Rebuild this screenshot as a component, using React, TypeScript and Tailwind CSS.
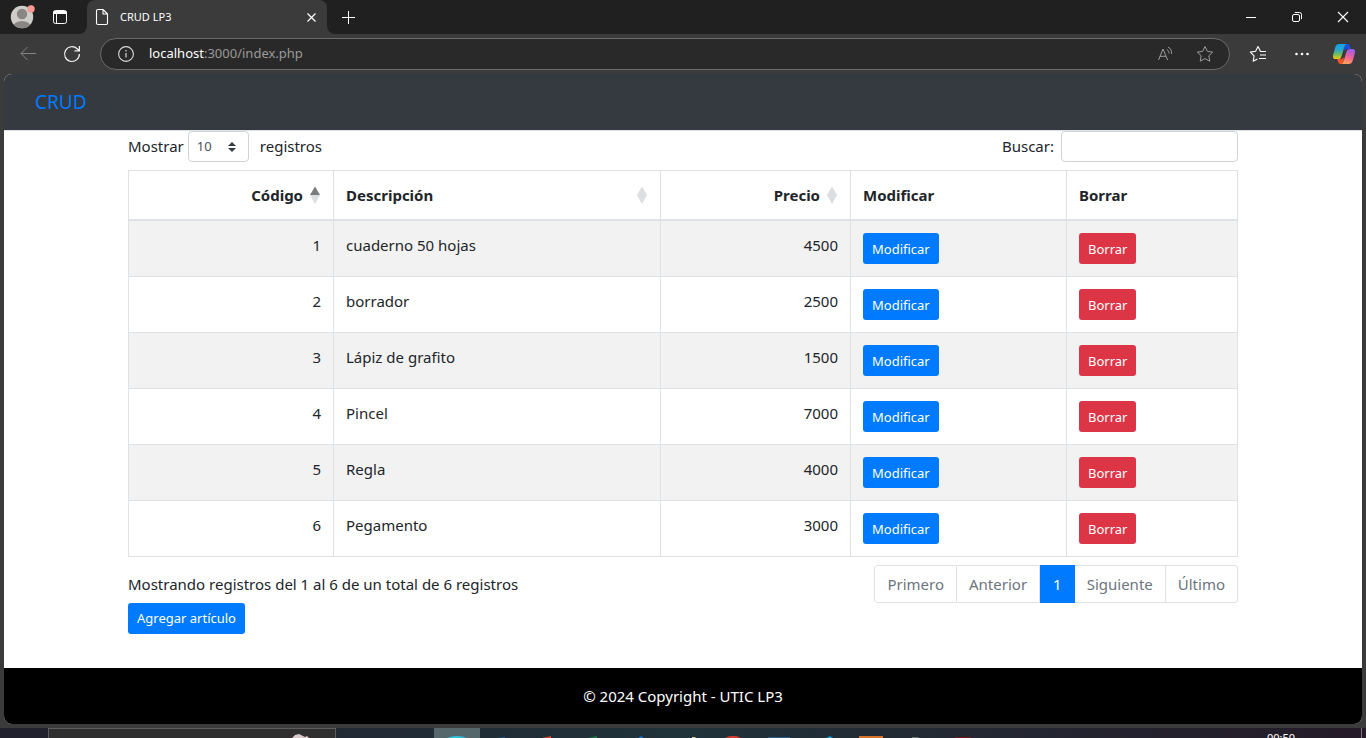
import React, { useState } from "react";

type Articulo = { codigo: number; descripcion: string; precio: number };

const articulos: Articulo[] = [
  { codigo: 1, descripcion: "cuaderno 50 hojas", precio: 4500 },
  { codigo: 2, descripcion: "borrador", precio: 2500 },
  { codigo: 3, descripcion: "Lápiz de grafito", precio: 1500 },
  { codigo: 4, descripcion: "Pincel", precio: 7000 },
  { codigo: 5, descripcion: "Regla", precio: 4000 },
  { codigo: 6, descripcion: "Pegamento", precio: 3000 },
];

function TabStrip() {
  return (
    <div className="flex h-[34px] bg-[#3b3b3b] text-white">
      <div className="flex w-[87px] items-center gap-4 rounded-br-lg bg-[#202020] pl-[10px]">
        <button type="button" aria-label="Perfil">
          <svg width="26" height="26" viewBox="0 0 26 26" className="block">
            <defs>
              <clipPath id="avatar">
                <circle cx="12" cy="13" r="11.2" />
              </clipPath>
            </defs>
            <circle cx="12" cy="13" r="11.2" fill="#cfcdca" />
            <g clipPath="url(#avatar)" fill="#8a8683">
              <circle cx="12" cy="10" r="5.2" />
              <ellipse cx="12" cy="22.5" rx="8.5" ry="5.6" />
            </g>
            <circle cx="21" cy="5" r="3.7" fill="#f79a94" />
          </svg>
        </button>
        <button type="button" aria-label="Menú de pestañas">
          <svg width="16" height="16" viewBox="0 0 16 16" fill="none" stroke="#fff" className="block">
            <rect x="1.5" y="1.5" width="13" height="13" rx="2" />
            <path d="M1.500 3.500h13" strokeWidth="3" />
            <path d="M4.500 4v10.500" />
          </svg>
        </button>
      </div>
      <div className="flex w-60 bg-linear-to-b from-[#202020] from-50% to-[#3b3b3b] to-50%">
        <div className="flex flex-1 items-center rounded-t-lg bg-[#3b3b3b] px-2">
          <svg width="14" height="18" viewBox="0 0 14 18" fill="none" stroke="#fff" strokeWidth="1.1" strokeLinejoin="round">
            <path d="M1.500 3a1.500 1.500 0 0 1 1.500-1.500h5L12.500 6v9a1.500 1.500 0 0 1-1.500 1.500H3A1.500 1.500 0 0 1 1.500 15zM8 1.500V6h4.500" />
          </svg>
          <span className="ml-[11px] flex-1 text-[11px]">CRUD LP3</span>
          <button type="button" aria-label="Cerrar pestaña" className="mr-[2px]">
            <svg width="11" height="11" viewBox="0 0 11 11" stroke="#fff" strokeWidth="1.2" className="block">
              <path d="M1.500 1.500l8 8M9.500 1.500l-8 8" />
            </svg>
          </button>
        </div>
      </div>
      <div className="flex flex-1 rounded-bl-lg bg-[#202020]">
        <button type="button" aria-label="Nueva pestaña" className="ml-[14px]">
          <svg width="15" height="15" viewBox="0 0 15 15" stroke="#fff" className="block">
            <path d="M7.500 1v13M1 7.500h13" />
          </svg>
        </button>
        <div className="ml-auto flex">
          <button type="button" aria-label="Minimizar" className="flex w-[46px] items-center justify-center">
            <svg width="12" height="12" viewBox="0 0 12 12" stroke="#fff">
              <path d="M1 6.500h10" />
            </svg>
          </button>
          <button type="button" aria-label="Restaurar" className="flex w-[46px] items-center justify-center">
            <svg width="12" height="12" viewBox="0 0 12 12" fill="none" stroke="#fff">
              <rect x="1.500" y="3.500" width="7" height="7" rx="1.500" />
              <path d="M3.800 1.500H8.500a2 2 0 0 1 2 2v4.700" />
            </svg>
          </button>
          <button type="button" aria-label="Cerrar" className="flex w-[46px] items-center justify-center">
            <svg width="12" height="12" viewBox="0 0 12 12" stroke="#fff" strokeWidth="1.100">
              <path d="M1 1l10 10M11 1L1 11" />
            </svg>
          </button>
        </div>
      </div>
    </div>
  );
}

function CopilotLogo() {
  return (
    <svg width="24" height="22" viewBox="0 0 24 22" className="block">
      <defs>
        <linearGradient id="cpA" x1="0" y1="0" x2="0" y2="1">
          <stop offset="0" stopColor="#12a2ee" />
          <stop offset="0.400" stopColor="#2ba7c8" />
          <stop offset="0.700" stopColor="#73bb5c" />
          <stop offset="1" stopColor="#f5c90b" />
        </linearGradient>
        <linearGradient id="cpB" x1="0.600" y1="0" x2="0.300" y2="1">
          <stop offset="0" stopColor="#9a5cf0" />
          <stop offset="0.500" stopColor="#f0609a" />
          <stop offset="1" stopColor="#fda45a" />
        </linearGradient>
      </defs>
      <path d="M12 1h3.500c1.800 0 2.300 1.500 2.700 3l.6 2H16c-2 0-3 .6-3.600 2z" fill="#1d50d8" />
      <path d="M12 21H8.500c-1.800 0-2.300-1.500-2.700-3l-.6-2H8c2 0 3-.6 3.600-2z" fill="#f0542b" />
      <path d="M7.200 1h7.300c-1.200.3-1.800 1.500-2.300 3.200l-2.700 9c-.6 2-1.500 2.800-3.500 2.800H3.600C1 16 .6 13.800 1.200 11.700l2-7.200C3.900 2.200 5 1 7.200 1z" fill="url(#cpA)" />
      <path d="M16.800 21H9.500c1.200-.3 1.800-1.500 2.300-3.200l2.700-9C15.100 6.800 16 6 18 6h2.400c2.600 0 3 2.200 2.400 4.300l-2 7.200c-.7 2.300-1.800 3.500-4 3.500z" fill="url(#cpB)" />
    </svg>
  );
}

function AddressBar() {
  return (
    <div className="flex h-10 items-center bg-[#3b3b3b] pr-[10px] pl-5">
      <button type="button" aria-label="Atrás">
        <svg width="16" height="16" viewBox="0 0 16 16" fill="none" stroke="#858585" className="block">
          <path d="M16 7.500H1M7.500 1l-6.500 6.500 6.500 6.500" />
        </svg>
      </button>
      <button type="button" aria-label="Actualizar" className="ml-[27px]">
        <svg width="18" height="18" viewBox="0 0 18 18" fill="none" stroke="#f4f4f4" strokeWidth="1.200" className="block">
          <path d="M16.400 9A7.400 7.400 0 1 1 14.200 3.800L16 5.600M16.400 1v4.900h-4.900" />
        </svg>
      </button>
      <div className="ml-[19px] flex h-8 flex-1 items-center rounded-full border border-[#6b6b6b] bg-[#292929] pr-[15px] pl-4">
        <svg width="18" height="18" viewBox="0 0 18 18" fill="none" stroke="#dcdcdc" strokeWidth="1.100">
          <circle cx="9" cy="9" r="7.400" />
          <path d="M9 8v4.500" strokeWidth="1.200" />
          <path d="M9 5v1.500" strokeWidth="1.200" />
        </svg>
        <span className="ml-[14px] flex-1 text-[13px] text-[#9a9a9a]">
          <span className="text-white">localhost</span>:3000/index.php
        </span>
        <button type="button" aria-label="Leer en voz alta">
          <svg width="18" height="16" viewBox="0 0 18 16" fill="none" stroke="#9c9c9c" className="block">
            <path d="M2.500 14L7 3l4.600 11M4 10.300h6M10.800 3.700c1.600.7 2.300 2 2.200 3.800M12 1.200c2.700 1.100 4 3.500 3.500 6.700" />
          </svg>
        </button>
        <button type="button" aria-label="Agregar a favoritos" className="ml-[22px]">
          <svg width="18" height="18" viewBox="0 0 18 18" fill="none" stroke="#9c9c9c" strokeLinejoin="round" className="block">
            <path d="M9 1.500l2.400 4.900 5.300.7-3.900 3.700 1 5.400L9 13.600l-4.800 2.600 1-5.400L1.300 7.100l5.300-.7z" />
          </svg>
        </button>
      </div>
      <button type="button" aria-label="Favoritos" className="ml-[19px]">
        <svg width="18" height="18" viewBox="0 0 18 18" fill="none" stroke="#fff" strokeWidth="1.100" strokeLinejoin="round" className="block">
          <path d="M17 6.500h-5.400L9 1.500 6.600 6.300l-5.300.8 3.800 3.800-.9 5.400L8.400 14.100M11 10h6M10 13.500h7" />
        </svg>
      </button>
      <button type="button" aria-label="Configuración y más" className="ml-[27px]">
        <svg width="16" height="16" viewBox="0 0 16 16" fill="#fff" className="block">
          <circle cx="2.500" cy="8" r="1.300" />
          <circle cx="8" cy="8" r="1.300" />
          <circle cx="13.500" cy="8" r="1.300" />
        </svg>
      </button>
      <button type="button" aria-label="Copilot" className="ml-[22px]">
        <CopilotLogo />
      </button>
    </div>
  );
}

function SortIcon({ active }: { active?: boolean }) {
  return (
    <svg width="10" height="18" viewBox="0 0 10 18" className="shrink-0">
      <path d="M5 .5l5 8.500H0z" fill={active ? "#7a7c7f" : "#dddedf"} />
      <path d="M5 18l5-9H0z" fill="#dddedf" />
    </svg>
  );
}

const th = "h-[50px] border-r border-b-2 border-[#dee2e6] pr-[13px] pl-3 text-left font-bold";
const td = "border-r border-b border-[#dee2e6] p-3 align-top leading-6";
const smallButton = "h-[31px] rounded-[3px] px-[9px] text-[13px] text-white";

function ArticleTable() {
  return (
    <table className="mt-2 w-full table-fixed border-separate border-spacing-0 border-t border-l border-[#dee2e6]">
      <thead>
        <tr>
          <th className={`${th} w-[205px]`} aria-sort="ascending">
            <button type="button" className="flex w-full items-center justify-end gap-[7px]">
              Código <SortIcon active />
            </button>
          </th>
          <th className={`${th} w-[327px]`}>
            <button type="button" className="flex w-full items-center justify-between">
              Descripción <SortIcon />
            </button>
          </th>
          <th className={`${th} w-[190px]`}>
            <button type="button" className="flex w-full items-center justify-end gap-[7px]">
              Precio <SortIcon />
            </button>
          </th>
          <th className={`${th} w-[216px]`}>Modificar</th>
          <th className={th}>Borrar</th>
        </tr>
      </thead>
      <tbody>
        {articulos.map((a) => (
          <tr key={a.codigo} className="odd:bg-[#f2f2f2]">
            <td className={`${td} text-right`}>{a.codigo}</td>
            <td className={td}>{a.descripcion}</td>
            <td className={`${td} text-right`}>{a.precio}</td>
            <td className={td}>
              <button type="button" className={`${smallButton} block bg-[#007bff]`}>Modificar</button>
            </td>
            <td className={td}>
              <button type="button" className={`${smallButton} block bg-[#dc3545]`}>Borrar</button>
            </td>
          </tr>
        ))}
      </tbody>
    </table>
  );
}

function Pagination() {
  const idle = "border-y border-r border-[#dee2e6] px-3 text-[#6c757d]";
  return (
    <nav aria-label="Paginación" className="flex h-[38px]">
      <button type="button" className={`${idle} rounded-l border-l`}>Primero</button>
      <button type="button" className={idle}>Anterior</button>
      <button type="button" aria-current="page" className="bg-[#007bff] px-[13px] text-white">1</button>
      <button type="button" className={idle}>Siguiente</button>
      <button type="button" className={`${idle} rounded-r`}>Último</button>
    </nav>
  );
}

function Page() {
  const [length, setLength] = useState("10");
  const [query, setQuery] = useState("");
  return (
    <div className="mx-1 mb-1 flex flex-1 flex-col overflow-hidden rounded-lg bg-white">
      <header className="flex h-[57px] items-center border-b border-[#dee2e6] bg-[#343a40] px-[31px]">
        <a href="#inicio" className="text-[19px] text-[#007bff]">CRUD</a>
      </header>
      <main className="mx-auto w-full max-w-[1110px] flex-1 text-[15px] text-[#212529]">
        <div className="flex items-center justify-between">
          <div className="flex items-center">
            <label htmlFor="cantidad">Mostrar</label>
            <div className="relative mx-1">
              <select
                id="cantidad"
                value={length}
                onChange={(e) => setLength(e.target.value)}
                className="block h-[31px] w-[61px] appearance-none rounded border border-[#ced4da] bg-white pl-2 text-[13px] text-[#495057]"
              >
                <option>10</option>
                <option>25</option>
                <option>50</option>
                <option>100</option>
              </select>
              <svg width="8" height="10" viewBox="0 0 8 10" fill="#343a40" className="pointer-events-none absolute top-[11px] right-[13px]">
                <path d="M4 0l4 4H0zM4 10l4-4H0z" />
              </svg>
            </div>
            <span className="ml-[7px]">registros</span>
          </div>
          <div className="flex items-center gap-[7px]">
            <label htmlFor="buscar">Buscar:</label>
            <input
              id="buscar"
              type="search"
              value={query}
              onChange={(e) => setQuery(e.target.value)}
              className="h-[31px] w-[177px] rounded border border-[#ced4da] bg-white px-2 text-[13px]"
            />
          </div>
        </div>
        <ArticleTable />
        <div className="mt-2 flex items-center justify-between">
          <p>Mostrando registros del 1 al 6 de un total de 6 registros</p>
          <Pagination />
        </div>
        <button type="button" className={`${smallButton} block bg-[#007bff]`}>Agregar artículo</button>
      </main>
      <footer className="flex h-14 items-center justify-center bg-black text-[15px] text-white">
        © 2024 Copyright - UTIC LP3
      </footer>
    </div>
  );
}

const apps = [
  <ellipse key="a" cx="23" cy="14" rx="13" ry="6" fill="#2cc4dc" />,
  <path key="b" d="M17 10l8-1v1z" fill="#2b579a" />,
  <path key="c" d="M16 10l9-2v2z" fill="#d24726" />,
  <path key="d" d="M16 10l9-2v2z" fill="#217346" />,
  <path key="e" d="M20 10l3-2 3 2z" fill="#1d74c8" />,
  <path key="f" d="M28 10V9h3l1 1z" fill="#d8cfae" />,
  <ellipse key="g" cx="23" cy="13" rx="10" ry="5" fill="#e0382f" />,
  <path key="h" d="M12 10V9h22v1z" fill="#28608f" />,
  <path key="i" d="M24 10l4-2 3 2z" fill="#159bd0" />,
  <path key="j" d="M11 10V8h24v2z" fill="#d77228" />,
  <path key="k" d="M18 10V9h6l1 1z" fill="#6d7477" />,
  <path key="l" d="M14 10l2-1h15v1z" fill="#7c1516" />,
];

function Taskbar() {
  return (
    <div className="flex h-[10px] overflow-hidden bg-linear-to-r from-[#21202d] via-[#20323a] to-[#241a28]">
      <div className="ml-12 flex w-72 justify-end border-x border-t border-[#5c5c5c] bg-[#2f2f2f] pr-6">
        <svg width="20" height="9" viewBox="0 0 20 9">
          <path d="M1 9l3-3 4-1 4 2 2 1 2-1 2 2z" fill="#d9c9cb" />
        </svg>
      </div>
      <div className="ml-[98px] flex">
        {apps.map((shape, i) => (
          <div key={i} className="w-[46px] first:bg-[#56676b]">
            <svg width="46" height="10" viewBox="0 0 46 10" className="block">{shape}</svg>
          </div>
        ))}
      </div>
      <time className="mt-1 mr-[66px] ml-auto text-[11px] leading-3 text-white">00:50</time>
      <div className="w-[5px] border-l border-[#7c7480]" />
    </div>
  );
}

export default function App() {
  return (
    <div className="flex min-h-screen flex-col bg-[#3b3b3b] font-['Noto_Sans',sans-serif]">
      <TabStrip />
      <AddressBar />
      <Page />
      <Taskbar />
    </div>
  );
}
